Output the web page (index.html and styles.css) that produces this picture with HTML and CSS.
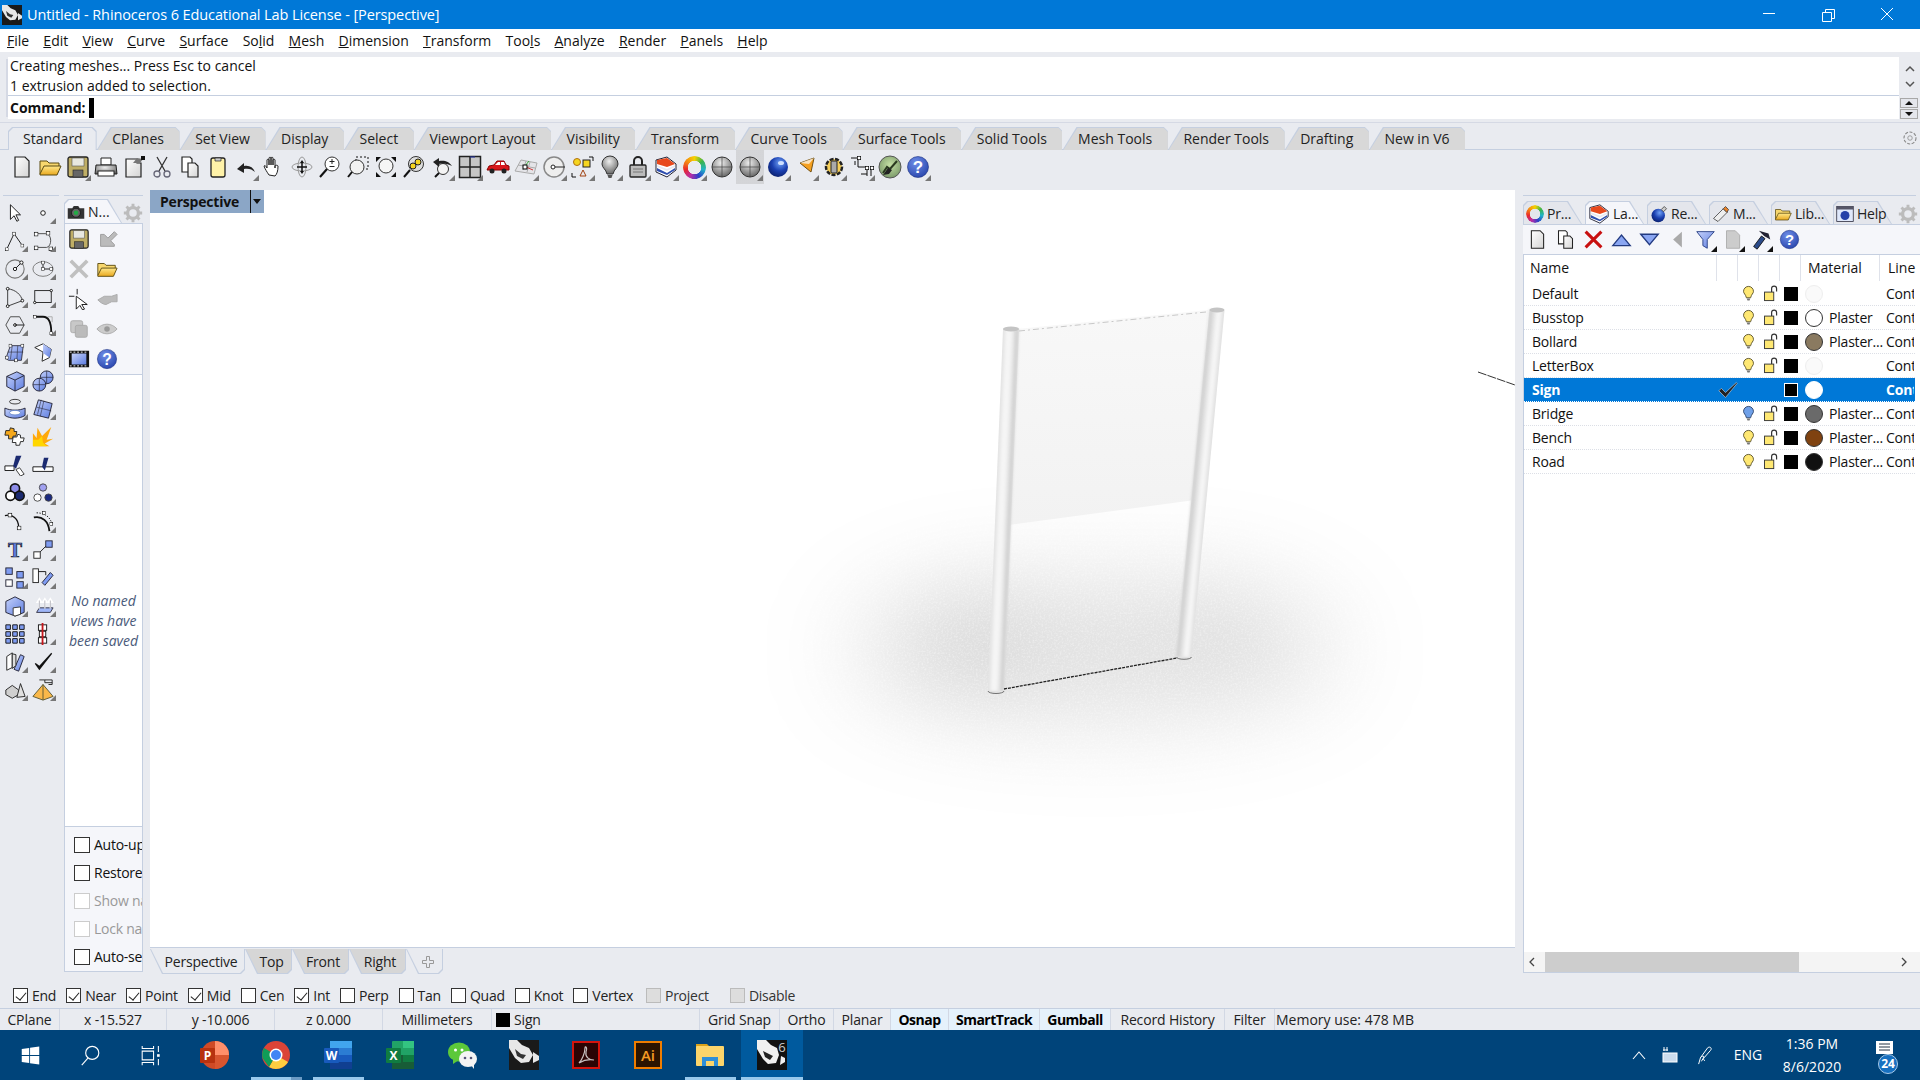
FILE: index.html
```html
<!DOCTYPE html>
<html lang="en">
<head>
<meta charset="utf-8">
<title>Untitled - Rhinoceros 6</title>
<link rel="stylesheet" href="styles.css">
</head>
<body>
<svg class="defs" aria-hidden="true">
  <defs>
    <linearGradient id="gw" x1="0" y1="0" x2="1" y2="1"><stop offset="0" stop-color="#fff"/><stop offset="1" stop-color="#d4d4d4"/></linearGradient>
    <linearGradient id="gf" x1="0" y1="0" x2="0" y2="1"><stop offset="0" stop-color="#ffe88a"/><stop offset="1" stop-color="#e9a81e"/></linearGradient>
    <linearGradient id="gb" x1="0" y1="0" x2="1" y2="1"><stop offset="0" stop-color="#c6d2fb"/><stop offset="1" stop-color="#5d7de0"/></linearGradient>
    <linearGradient id="gp" x1="0" y1="0" x2="0" y2="1"><stop offset="0" stop-color="#f8f8f8"/><stop offset="1" stop-color="#f2f2f2"/></linearGradient>
    <radialGradient id="gs" cx=".45" cy=".3" r=".8"><stop offset="0" stop-color="#eee"/><stop offset="1" stop-color="#555"/></radialGradient>
    <radialGradient id="gbl" cx=".6" cy=".3" r=".8"><stop offset="0" stop-color="#6fa0f5"/><stop offset=".5" stop-color="#1a3fb0"/><stop offset="1" stop-color="#071a60"/></radialGradient>
    <radialGradient id="gh" cx=".4" cy=".3" r=".8"><stop offset="0" stop-color="#6f8fe8"/><stop offset="1" stop-color="#2440a8"/></radialGradient>
    <radialGradient id="gg" cx=".5" cy=".4" r=".7"><stop offset="0" stop-color="#c5e0a5"/><stop offset="1" stop-color="#6f8f60"/></radialGradient>
    <filter id="soft" x="-30%" y="-10%" width="160%" height="120%"><feGaussianBlur stdDeviation="1.400"/></filter>
    <filter id="shadow" filterUnits="userSpaceOnUse" x="500" y="360" width="1200" height="640">
      <feGaussianBlur in="SourceGraphic" stdDeviation="50" result="b"/>
      <feTurbulence type="fractalNoise" baseFrequency=".55" numOctaves="2" seed="4" result="n"/>
      <feColorMatrix in="n" type="matrix" values="0 0 0 0 0 0 0 0 0 0 0 0 0 0 0 0 0 0 .9 .5" result="a"/>
      <feComposite in="b" in2="a" operator="in"/>
    </filter>
    <symbol id="doc" viewBox="0 0 24 24"><path d="M5 2h10l4 4v16H5z" fill="url(#gw)" stroke="#222" stroke-width="1.2"/></symbol>
    <symbol id="copy" viewBox="0 0 24 24"><path d="M4 2h8l2 2v13H4z" fill="#fff" stroke="#222" stroke-width="1.2"/><path d="M10 8h7l3 3v11H10z" fill="url(#gw)" stroke="#222" stroke-width="1.2"/></symbol>
    <symbol id="folder" viewBox="0 0 24 24"><path d="M2 19V6h7l2 2h10v4" fill="#f7d76e" stroke="#5a4a10"/><path d="M2 19l4-8h17l-4 9H2z" fill="url(#gf)" stroke="#5a4a10"/></symbol>
    <symbol id="save" viewBox="0 0 24 24"><rect x="2" y="2" width="20" height="20" rx="2" fill="#bfae66" stroke="#222" stroke-width="1.3"/><rect x="6" y="3" width="12" height="8" fill="#e8e8e0" stroke="#555" stroke-width=".6"/><rect x="7" y="15" width="10" height="7" fill="#666" stroke="#222" stroke-width=".6"/></symbol>
    <symbol id="help" viewBox="0 0 24 24"><circle cx="12" cy="12" r="10.5" fill="url(#gh)" stroke="#1b2f80" stroke-width=".6"/><text x="12" y="18" text-anchor="middle" font-family="Liberation Sans, sans-serif" font-weight="700" font-size="17" fill="#fff">?</text></symbol>
    <symbol id="bulb" viewBox="0 0 24 24"><path d="M12 2a7 7 0 0 0-7 7c0 3 3 4 4 9h6c1-5 4-6 4-9a7 7 0 0 0-7-7z" fill="#ffe873" stroke="#4d4420" stroke-width="1.2"/><path d="M9.500 19h5l-1 3h-3z" fill="#777"/></symbol>
    <symbol id="bulbb" viewBox="0 0 24 24"><path d="M12 2a7 7 0 0 0-7 7c0 3 3 4 4 9h6c1-5 4-6 4-9a7 7 0 0 0-7-7z" fill="#6fa0e8" stroke="#243a60" stroke-width="1.2"/><path d="M9.500 19h5l-1 3h-3z" fill="#777"/></symbol>
    <symbol id="lock" viewBox="-2 0 24 24"><rect x="3" y="10" width="13" height="12" fill="#ffe873" stroke="#333" stroke-width="1.300"/><path d="M13 10V5a3.500 3.500 0 0 1 7 0v4" fill="none" stroke="#333" stroke-width="1.700"/></symbol>
    <symbol id="node" viewBox="0 0 6 6"><rect x=".5" y=".5" width="5" height="5" fill="#fff" stroke="#000"/></symbol>
    <symbol id="gear" viewBox="0 0 24 24"><circle cx="12" cy="12" r="6.500" fill="none" stroke="#bcbcbc" stroke-width="4"/><path d="M12 1v5M12 18v5M1 12h5M18 12h5M4.200 4.200l3.500 3.500M16.300 16.300l3.500 3.500M4.200 19.800l3.500-3.500M16.300 7.700l3.500-3.500" stroke="#bcbcbc" stroke-width="3.500"/></symbol>
    <symbol id="rhino" viewBox="0 0 30 30"><rect width="30" height="30" fill="#1a1a1a"/><path d="M0 0h8l5 5 7 3 4 7-4 7-8 1-6-5-6-10zM24 12l6 4v4l-6 3z" fill="#e8e8e8"/><path d="M6 9l6 5 5 1-3 4-6-3z" fill="#333"/></symbol>
    <symbol id="shield" viewBox="0 0 24 24"><path d="M2 5l11-3 9 7v6l-9 7-11-5z" fill="#fff" stroke="#223" stroke-width="1"/><path d="M3 5l10-2 8 6-8 3-10-3z" fill="#e8481c"/><path d="M3 10l10 4 8-4v2l-8 4-10-4z" fill="#e8e8f0"/><path d="M3 13l10 5 8-5v2l-8 5-10-4z" fill="#3050b0"/></symbol>
  </defs>
</svg>

<header class="titlebar">
  <svg class="app-icon"><use href="#rhino"/></svg>
  <span class="title-text">Untitled - Rhinoceros 6 Educational Lab License - [Perspective]</span>
  <div class="winbtns">
    <svg viewBox="0 0 60 29"><path d="M24 13.500h12" stroke="#fff"/></svg>
    <svg viewBox="0 0 60 29"><path d="M24.500 12.500h9v9h-9zM27.500 12.500v-3h9v9h-3" fill="none" stroke="#fff"/></svg>
    <svg viewBox="0 0 60 29"><path d="M24 8l12 12M36 8L24 20" stroke="#fff"/></svg>
  </div>
</header>

<nav class="menubar">
  <span><u>F</u>ile</span><span><u>E</u>dit</span><span><u>V</u>iew</span><span><u>C</u>urve</span><span><u>S</u>urface</span><span>So<u>l</u>id</span><span><u>M</u>esh</span><span><u>D</u>imension</span><span><u>T</u>ransform</span><span>Too<u>l</u>s</span><span><u>A</u>nalyze</span><span><u>R</u>ender</span><span><u>P</u>anels</span><span><u>H</u>elp</span>
</nav>

<section class="cmd">
  <div class="cmd-main">
    <div class="history"><div>Creating meshes... Press Esc to cancel</div><div>1 extrusion added to selection.</div></div>
    <div class="prompt"><b>Command:</b><i class="caret"></i></div>
  </div>
  <div class="cmd-side">
    <div class="cmd-scroll">
      <svg viewBox="0 0 12 8"><path d="M2 6l4-4 4 4" fill="none" stroke="#555" stroke-width="1.500"/></svg>
      <svg viewBox="0 0 12 8"><path d="M2 2l4 4 4-4" fill="none" stroke="#555" stroke-width="1.500"/></svg>
    </div>
    <div class="spin"><span class="up"></span><span class="down"></span></div>
  </div>
</section>

<div class="ribbon">
  <span class="rtab current">Standard</span><span class="rtab">CPlanes</span><span class="rtab">Set View</span><span class="rtab">Display</span><span class="rtab">Select</span><span class="rtab">Viewport Layout</span><span class="rtab">Visibility</span><span class="rtab">Transform</span><span class="rtab">Curve Tools</span><span class="rtab">Surface Tools</span><span class="rtab">Solid Tools</span><span class="rtab">Mesh Tools</span><span class="rtab">Render Tools</span><span class="rtab">Drafting</span><span class="rtab">New in V6</span>
  <svg class="ribbon-gear" viewBox="0 0 24 24"><circle cx="12" cy="12" r="8" fill="none" stroke="#888" stroke-width="1.500" stroke-dasharray="4 2"/><circle cx="12" cy="12" r="3" fill="none" stroke="#888"/></svg>
</div>

<div class="toolbar">
  <span class="t"><svg><use href="#doc"/></svg></span>
  <span class="t"><svg><use href="#folder"/></svg></span>
  <span class="t m"><svg><use href="#save"/></svg></span>
  <span class="t"><svg viewBox="0 0 24 24"><path d="M7 3h10v7H7z" fill="#fff" stroke="#222"/><path d="M2 10h20l1 9H1z" fill="url(#gs)" stroke="#222"/><rect x="4" y="16" width="16" height="5" fill="#fff" stroke="#222"/></svg></span>
  <span class="t"><svg viewBox="0 0 24 24"><path d="M4 4h11v4h4v14H4z" fill="url(#gw)" stroke="#222" stroke-width="1.200"/><path d="M11 8l4-5 6 1-3 4z" fill="#777"/><rect x="19" y="1" width="4" height="4" fill="#111"/></svg></span>
  <span class="t"><svg viewBox="0 0 24 24"><path d="M7 2l8 14M17 2L9 16" stroke="#333" stroke-width="1.300"/><circle cx="7" cy="19" r="3" fill="none" stroke="#667" stroke-width="1.300"/><circle cx="17" cy="19" r="3" fill="none" stroke="#667" stroke-width="1.300"/></svg></span>
  <span class="t"><svg><use href="#copy"/></svg></span>
  <span class="t"><svg viewBox="0 0 24 24"><rect x="5" y="3" width="14" height="19" rx="2" fill="#fff2a8" stroke="#222" stroke-width="1.300"/><path d="M9 3h6v3H9z" fill="#ccc" stroke="#222" stroke-width=".7"/></svg></span>
  <span class="t m"><svg viewBox="0 0 24 24"><path d="M3 14l7-6v3c5-1 9 1 11 6-3-3-7-4-11-3v4z" fill="#222"/></svg></span>
  <span class="t"><svg viewBox="0 0 24 24"><path d="M7 20c-2-3-4-6-5-9 1-1 2 0 3 2V5c0-1 2-1 2 0v5-7c0-1 2-1 2 0v7-7c0-1 2-1 2 0v7-5c0-1 2-1 2 0v8-2c0-1 3-1 3 0 0 5-1 8-3 10z" fill="#fff" stroke="#222" stroke-linejoin="round"/></svg></span>
  <span class="t"><svg viewBox="0 0 24 24"><ellipse cx="12" cy="12" rx="10" ry="4" fill="none" stroke="#9a9a9a"/><ellipse cx="12" cy="12" rx="4" ry="10" fill="none" stroke="#9a9a9a"/><path d="M12 7v10M7 12h10" stroke="#111" stroke-width="1.500"/><path d="M12 5l-2 3h4zM12 19l-2-3h4z" fill="#111"/></svg></span>
  <span class="t"><svg viewBox="0 0 24 24"><circle cx="14" cy="9" r="7" fill="#fff" stroke="#333"/><path d="M9 14l-7 8" stroke="#111" stroke-width="2"/><path d="M14 4v5M11.500 6.500h5M11.500 11.500h5" stroke="#222"/></svg></span>
  <span class="t"><svg viewBox="0 0 24 24"><rect x="10" y="2" width="12" height="12" fill="none" stroke="#111" stroke-dasharray="2 2"/><circle cx="11" cy="12" r="7" fill="#f2f2f2" stroke="#333"/><path d="M6 17l-4 5" stroke="#111" stroke-width="2"/></svg></span>
  <span class="t"><svg viewBox="0 0 24 24"><circle cx="12" cy="11" r="7" fill="#f6f6f6" stroke="#333"/><path d="M2 2h5L2 7zM22 2v5l-5-5zM2 22v-5l5 5zM22 22h-5l5-5z" fill="#111"/></svg></span>
  <span class="t"><svg viewBox="0 0 24 24"><circle cx="14" cy="9" r="7.500" fill="#ddd" stroke="#333"/><circle cx="11" cy="11" r="3" fill="#f5d520" stroke="#222"/><circle cx="16" cy="7" r="3" fill="#f5d520" stroke="#222"/><path d="M8 15l-6 7" stroke="#111" stroke-width="2"/></svg></span>
  <span class="t m"><svg viewBox="0 0 24 24"><circle cx="13" cy="14" r="5.500" fill="#f4f4f4" stroke="#333"/><path d="M9 18l-4 4" stroke="#111" stroke-width="2"/><path d="M3 7l6-4v3c5-1 10 0 13 5-4-2-8-3-13-2v3z" fill="#222"/></svg></span>
  <span class="t m"><svg viewBox="0 0 24 24"><rect x="1.500" y="1.500" width="21" height="21" fill="#c6c6c6" stroke="#222" stroke-width="1.500"/><path d="M12 2v20M2 12h20" stroke="#222" stroke-width="1.500"/><path d="M12 2h5" stroke="#2233aa"/></svg></span>
  <span class="t m"><svg viewBox="0 0 24 24"><path d="M1 15l2-4 5-1 3-4h7l2 4 3 1v4z" fill="#d8171b" stroke="#800"/><path d="M9 10l3-3h2v3zM15 7h3l1 3h-4z" fill="#fff"/><circle cx="6" cy="16" r="2.500" fill="#222"/><circle cx="18" cy="16" r="2.500" fill="#222"/></svg></span>
  <span class="t m"><svg viewBox="0 0 24 24"><path d="M7 5l16 3-3 11L1 16z" fill="#e4e4e8" stroke="#aaa"/><path d="M12 6l-3 9M4 10l17 3M16 7l-3 10" stroke="#aaa"/><path d="M11 11l4-5" stroke="#3a3"/><path d="M12 12l7 3" stroke="#c33"/><rect x="9" y="10" width="4" height="4" fill="#fff" stroke="#000"/></svg></span>
  <span class="t m"><svg viewBox="0 0 24 24"><circle cx="12" cy="12" r="10" fill="#eee" stroke="#888" stroke-width="1.500"/><circle cx="11" cy="12" r="2" fill="#fff" stroke="#222"/><path d="M13 12h10" stroke="#222"/></svg></span>
  <span class="t m"><svg viewBox="0 0 24 24"><circle cx="7" cy="7" r="3.500" fill="#f5d520" stroke="#b07010"/><rect x="13" y="5" width="7" height="7" fill="#f5d520" stroke="#222"/><path d="M10 21l3-6 3 6z" fill="none" stroke="#a04010"/><path d="M2 18v4h4M19 2h4v4" fill="none" stroke="#111"/></svg></span>
  <span class="t m"><svg viewBox="0 0 24 24"><path d="M12 1a8 8 0 0 0-8 8c0 4 4 5 5 10h6c1-5 5-6 5-10a8 8 0 0 0-8-8z" fill="url(#gs)" stroke="#333"/><path d="M9.500 20h5l-1 3h-3z" fill="#555"/></svg></span>
  <span class="t m"><svg viewBox="0 0 24 24"><rect x="4" y="10" width="16" height="12" rx="1" fill="#bbb" stroke="#222" stroke-width="1.300"/><path d="M8 10V6a4 4 0 0 1 8 0v4" fill="none" stroke="#222" stroke-width="2"/><path d="M7 14h10M7 17h10" stroke="#777"/></svg></span>
  <span class="t m"><svg><use href="#shield"/></svg></span>
  <span class="t m"><i class="wheel"></i></span>
  <span class="t"><svg viewBox="0 0 24 24"><circle cx="12" cy="12" r="10" fill="url(#gs)" stroke="#333"/><path d="M2 12h20M12 2v20" stroke="#444" stroke-width=".7"/></svg></span>
  <span class="t m dots"><svg viewBox="0 0 24 24"><circle cx="12" cy="12" r="10" fill="url(#gs)" stroke="#333"/><path d="M2 12h20M12 2v20" stroke="#444" stroke-width=".7"/></svg></span>
  <span class="t m"><svg viewBox="0 0 24 24"><circle cx="12" cy="12" r="10" fill="url(#gbl)"/><ellipse cx="15" cy="8" rx="3" ry="2" fill="#cfe0ff"/></svg></span>
  <span class="t m"><svg viewBox="0 0 24 24"><path d="M6 8l14-5-3 14z" fill="#f5a020" stroke="#735010"/><path d="M6 8l9 1 5-6z" fill="#fff" opacity=".7"/></svg></span>
  <span class="t m"><svg viewBox="0 0 24 24"><circle cx="12" cy="12" r="8" fill="#f5cf5a" stroke="#222" stroke-dasharray="4 1.500" stroke-width="2.500"/><rect x="9" y="6" width="6" height="12" rx="1" fill="#aaa" stroke="#222"/></svg></span>
  <span class="t m"><svg viewBox="0 0 24 24"><path d="M1 3h7v9h9v9M21 13v8M5 6v4M11 19h6" fill="none" stroke="#111"/><use href="#node" x="7" y="1" width="4" height="4"/><use href="#node" x="15" y="11" width="4" height="4"/><use href="#node" x="20" y="11" width="4" height="4"/></svg></span>
  <span class="t"><svg viewBox="0 0 24 24"><circle cx="12" cy="12" r="11" fill="url(#gg)" stroke="#555"/><path d="M5 18l4-6 3 2 7-8" fill="none" stroke="#2a3a20" stroke-width="2"/><path d="M5 20l5-7 4 2-3 4z" fill="#222"/></svg></span>
  <span class="t m"><svg><use href="#help"/></svg></span>
</div>

<main class="work">
  <aside class="leftbar">
    <i class="grip"></i>
    <div class="ltools">
      <span class="l"><svg viewBox="0 0 24 24"><path d="M7 3v16l4-4 3 6 2-1-3-6h5z" fill="#fff" stroke="#111"/></svg></span>
      <span class="l m"><svg viewBox="0 0 24 24"><circle cx="12" cy="12" r="2.500" fill="#fff" stroke="#111"/></svg></span>
      <span class="l m"><svg viewBox="0 0 24 24"><path d="M3 21L11 4l9 13" fill="none" stroke="#111"/><use href="#node" x="1" y="19" width="4" height="4"/><use href="#node" x="9" y="2" width="4" height="4"/><use href="#node" x="18" y="15" width="4" height="4"/></svg></span>
      <span class="l m"><svg viewBox="0 0 24 24"><path d="M4 4h11c7 0 7 14 1 15H4" fill="none" stroke="#444"/><use href="#node" x="2" y="17" width="5" height="5"/><use href="#node" x="2" y="2" width="5" height="5"/><use href="#node" x="15" y="1" width="5" height="5"/><use href="#node" x="18" y="18" width="5" height="5"/></svg></span>
      <span class="l m"><svg viewBox="0 0 24 24"><circle cx="12" cy="12" r="10" fill="none" stroke="#777" stroke-width="1.200"/><path d="M12 12l7-7" stroke="#111"/><circle cx="12" cy="12" r="1.800" fill="#fff" stroke="#111"/><circle cx="19" cy="5" r="1.800" fill="#fff" stroke="#111"/></svg></span>
      <span class="l m"><svg viewBox="0 0 24 24"><ellipse cx="12" cy="12" rx="11" ry="8" fill="none" stroke="#777"/><path d="M12 12V5M12 12h9" stroke="#111"/><use href="#node" x="10" y="3" width="4" height="4"/><use href="#node" x="10" y="10" width="4" height="4"/><use href="#node" x="19" y="10" width="4" height="4"/></svg></span>
      <span class="l m"><svg viewBox="0 0 24 24"><path d="M4 3c9 1 15 7 16 13L4 22z" fill="none" stroke="#333"/><circle cx="4" cy="3" r="1.500" fill="#fff" stroke="#111"/><circle cx="20" cy="16" r="1.500" fill="#fff" stroke="#111"/><circle cx="4" cy="22" r="1.500" fill="#fff" stroke="#111"/></svg></span>
      <span class="l m"><svg viewBox="0 0 24 24"><rect x="3" y="5" width="18" height="13" fill="none" stroke="#222"/><circle cx="3" cy="18" r="1.300" fill="#fff" stroke="#111"/><circle cx="21" cy="5" r="1.300" fill="#fff" stroke="#111"/></svg></span>
      <span class="l m"><svg viewBox="0 0 24 24"><path d="M7 3h10l5 9-5 9H7l-5-9z" fill="none" stroke="#444"/><circle cx="12" cy="12" r="1.500" fill="#fff" stroke="#111"/><path d="M12 12h10" stroke="#111"/></svg></span>
      <span class="l m"><svg viewBox="0 0 24 24"><path d="M2 3h10c6 0 9 5 9 17" fill="none" stroke="#111" stroke-width="2"/><path d="M17 3h5v6" fill="none" stroke="#aaa"/><use href="#node" x="1" y="1" width="4" height="4"/><use href="#node" x="19" y="19" width="4" height="4"/></svg></span>
      <span class="l m"><svg viewBox="0 0 24 24"><path d="M7 4h14l-2 16H5L2 18z" fill="url(#gb)" stroke="#334"/><path d="M9 4L7 19M15 4l-1 16M4 11h17" stroke="#334" stroke-width=".7"/><use href="#node" x="5" y="2" width="4" height="4"/><use href="#node" x="18" y="2" width="4" height="4"/><use href="#node" x="1" y="15" width="4" height="4"/><use href="#node" x="11" y="18" width="4" height="4"/></svg></span>
      <span class="l m"><svg viewBox="0 0 24 24"><path d="M3 6l9-4 9 6-2 9-8 4 1-10z" fill="#fff" stroke="#222"/><path d="M12 2l9 6-2 9-7-5z" fill="url(#gb)"/></svg></span>
      <span class="l m"><svg viewBox="0 0 24 24"><path d="M3 7l11-5 8 4v12l-10 5-9-5z" fill="url(#gb)" stroke="#223"/><path d="M3 7l9 4 10-5M12 11v12" stroke="#223" fill="none"/></svg></span>
      <span class="l m"><svg viewBox="0 0 24 24"><circle cx="16" cy="8" r="7" fill="url(#gb)" stroke="#223"/><circle cx="8" cy="16" r="7" fill="url(#gb)" stroke="#223"/><path d="M1 16h14M8 9v14M9 8h14M16 1v14" stroke="#223" stroke-width=".7"/></svg></span>
      <span class="l m"><svg viewBox="0 0 24 24"><ellipse cx="12" cy="4" rx="6" ry="2.500" fill="none" stroke="#333"/><path d="M1 11c6 3 16 3 22 0v8c-6 4-16 4-22 0z" fill="url(#gb)" stroke="#223"/><ellipse cx="12" cy="16" rx="6" ry="2.500" fill="#fff" stroke="#68c"/></svg></span>
      <span class="l m"><svg viewBox="0 0 24 24"><path d="M7 2l15 4-4 16L2 18z" fill="url(#gb)" stroke="#223"/><path d="M13 3l-4 17M5 10l16 4M10 2l-4 16" stroke="#223" stroke-width=".6"/></svg></span>
      <span class="l"><svg viewBox="0 0 24 24"><path d="M2 5h4l1-3 4 1v3h3l-1 5h-3l-1 3H5V10H1z" fill="#f5a81c" stroke="#222"/><path d="M10 12h4l1-3 3 1v3h4l-1 4h-3l-1 4h-4v-3H9z" fill="#fff" stroke="#222"/></svg></span>
      <span class="l"><svg viewBox="0 0 24 24"><path d="M1 22V8l4 5 1-11 5 9 10-10-5 14 7-1-9 5 5 3z" fill="#ffa90a"/><path d="M1 22V15l6 0 4-4 1 7 4 4z" fill="#ffd700"/></svg></span>
      <span class="l"><svg viewBox="0 0 24 24"><path d="M1 13h10v5H1z" fill="#fff" stroke="#111"/><path d="M10 13l3-11h6l-6 14z" fill="#1b2a70"/><path d="M13 17l4-2 5 7-4 2z" fill="#fff" stroke="#333"/></svg></span>
      <span class="l"><svg viewBox="0 0 24 24"><path d="M1 14h22v5H1z" fill="#fff" stroke="#111"/><path d="M11 14l2-10h5l-4 14z" fill="#1b2a70"/></svg></span>
      <span class="l m"><svg viewBox="0 0 24 24"><circle cx="12" cy="7" r="5" fill="#8c8ce8" stroke="#111" stroke-width="1.800"/><circle cx="7" cy="15" r="5" fill="#fff" stroke="#111" stroke-width="1.800"/><circle cx="17" cy="15" r="5" fill="#1b2a70" stroke="#111" stroke-width="1.800"/></svg></span>
      <span class="l m"><svg viewBox="0 0 24 24"><circle cx="12" cy="6" r="4" fill="#a0a0f0" stroke="#444"/><circle cx="6" cy="17" r="4" fill="#fff" stroke="#444"/><circle cx="18" cy="17" r="4" fill="#1b2a80" stroke="#444"/></svg></span>
      <span class="l"><svg viewBox="0 0 24 24"><path d="M1 5c8-2 15 3 15 13" fill="none" stroke="#111" stroke-width="1.500"/><use href="#node" x="4" y="2" width="5" height="5"/><use href="#node" x="14" y="16" width="5" height="5"/></svg></span>
      <span class="l m"><svg viewBox="0 0 24 24"><path d="M2 7c9-2 16 4 17 15" fill="none" stroke="#111" stroke-width="2"/><path d="M5 2c9 0 16 5 17 14" fill="none" stroke="#111" stroke-dasharray="1.500 1.500"/><use href="#node" x="11" y="0" width="4" height="4"/><use href="#node" x="19" y="12" width="4" height="4"/></svg></span>
      <span class="l m"><svg viewBox="0 0 24 24"><text x="12" y="20" text-anchor="middle" font-family="Liberation Serif, serif" font-size="23" font-weight="700" fill="#5d7de0" stroke="#111" stroke-width=".7">T</text></svg></span>
      <span class="l m"><svg viewBox="0 0 24 24"><rect x="2" y="14" width="7" height="7" fill="#fff" stroke="#222"/><rect x="15" y="2" width="7" height="7" fill="#7f9cf2" stroke="#223"/><path d="M9 14l6-6" stroke="#111"/></svg></span>
      <span class="l m"><svg viewBox="0 0 24 24"><rect x="2" y="1" width="7" height="7" fill="#7f9cf2" stroke="#223"/><rect x="14" y="5" width="7" height="7" fill="#7f9cf2" stroke="#223"/><rect x="2" y="14" width="7" height="7" fill="#fff" stroke="#223"/><rect x="14" y="16" width="7" height="7" fill="#7f9cf2" stroke="#223"/></svg></span>
      <span class="l m"><svg viewBox="0 0 24 24"><rect x="1" y="2" width="6" height="15" fill="#fff" stroke="#222"/><path d="M14 20l9-11 -3-3-9 11z" fill="#7f9cf2" stroke="#223"/><path d="M7 5h8v4" fill="none" stroke="#111"/></svg></span>
      <span class="l m"><svg viewBox="0 0 24 24"><path d="M2 7l10-5 10 5v12l-10 4-10-4z" fill="url(#gb)" stroke="#223"/><path d="M10 14l8-1v8l-6 2-2-1z" fill="#fff" stroke="#333"/></svg></span>
      <span class="l m"><svg viewBox="0 0 24 24"><path d="M5 19l3-5h15l-3 5z" fill="#9fb6f8" stroke="#334"/><path d="M8 15V5M14 15V5M20 15V5M5.500 8L8 4l2.500 4zM11.500 8L14 4l2.500 4zM17.500 8L20 4l2.500 4z" fill="#fff" stroke="#fff" stroke-width="1.500"/><path d="M8 15V6M14 15V6M20 15V6" stroke="#667" stroke-width=".5"/></svg></span>
      <span class="l"><svg viewBox="0 0 24 24"><path d="M2 2h5v5H2zM9.500 2h5v5h-5zM17 2h5v5h-5zM2 9.500h5v5H2zM9.500 9.500h5v5h-5zM17 9.500h5v5h-5zM2 17h5v5H2zM9.500 17h5v5h-5zM17 17h5v5h-5z" fill="#7f9cf2" stroke="#111"/></svg></span>
      <span class="l m"><svg viewBox="0 0 24 24"><rect x="7" y="2" width="9" height="6" fill="#fff" stroke="#111"/><rect x="8" y="9" width="7" height="6" fill="#fff" stroke="#111"/><rect x="7" y="16" width="9" height="6" fill="#fff" stroke="#111"/><path d="M11.500 0v24" stroke="#c4161c" stroke-width="2"/></svg></span>
      <span class="l m"><svg viewBox="0 0 24 24"><path d="M3 6l6-4v16l-6 3z" fill="#fff" stroke="#222"/><path d="M11 20L18 4l4 2-6 16z" fill="url(#gb)" stroke="#223"/><path d="M9 3l4 1v12l-4 3z" fill="#ddd" stroke="#222"/></svg></span>
      <span class="l m"><svg viewBox="0 0 24 24"><path d="M3 14l5 7L22 3l-1-1L8 16l-4-3z" fill="#111"/></svg></span>
      <span class="l m"><svg viewBox="0 0 24 24"><path d="M2 12l7-5 7 5v5l-7 4-7-4z" fill="#cfcfcf" stroke="#222"/><path d="M14 20l4-15 5 14z" fill="#e0e0e0" stroke="#222"/></svg></span>
      <span class="l m"><svg viewBox="0 0 24 24"><path d="M1 19l11-13 11 13-11 4z" fill="#f9b84a" stroke="#553"/><path d="M12 6v17" stroke="#553"/><path d="M8 1l6 0 0 3h8M14 1h8v5h-4" fill="none" stroke="#222"/></svg></span>
    </div>
  </aside>

  <aside class="named">
    <i class="grip"></i>
    <div class="ntabs">
      <span class="stab current nt"><svg class="s16" viewBox="0 0 24 24"><path d="M1 7h6l2-3h6l2 3h6v14H1z" fill="#333"/><circle cx="12" cy="13" r="6" fill="#666" stroke="#111"/><circle cx="12" cy="13" r="3" fill="#2a4"/></svg>N...</span>
      <svg class="panel-gear"><use href="#gear"/></svg>
    </div>
    <div class="ntools">
      <span class="n"><svg><use href="#save"/></svg></span>
      <span class="n"><svg viewBox="0 0 24 24"><path d="M5 20V7h4l4 4 7-7 3 3-7 7 4 4v2z" fill="#bbb" stroke="#999"/></svg></span>
      <span class="n"><svg viewBox="0 0 24 24"><path d="M3 3l18 18M21 3L3 21" stroke="#c0c0c0" stroke-width="4"/></svg></span>
      <span class="n"><svg><use href="#folder"/></svg></span>
      <span class="n"><svg viewBox="0 0 24 24"><path d="M1 9h6M10 1v6M9 9v14l4-4 3 5 2-1-3-5h6z" fill="#fff" stroke="#111"/></svg></span>
      <span class="n"><svg viewBox="0 0 24 24"><path d="M2 13l7-4h8l6-2v8h-6l-6 3c-3 0-6-2-9-5z" fill="#bbb" stroke="#aaa"/></svg></span>
      <span class="n"><svg viewBox="0 0 24 24"><rect x="3" y="3" width="13" height="13" rx="2" fill="#c8c8c8" stroke="#aaa"/><rect x="8" y="8" width="13" height="13" rx="2" fill="#bbb" stroke="#aaa"/></svg></span>
      <span class="n"><svg viewBox="0 0 24 24"><path d="M1 12c6-7 16-7 22 0-6 7-16 7-22 0z" fill="#ccc" stroke="#aaa"/><circle cx="12" cy="12" r="3" fill="#999"/></svg></span>
      <span class="n"><svg viewBox="0 0 24 24"><rect x="1" y="3" width="22" height="18" fill="#111"/><rect x="4" y="6" width="16" height="12" fill="url(#gb)"/><path d="M2 4.500h20M2 19.500h20" stroke="#fff" stroke-dasharray="2 2"/></svg></span>
      <span class="n"><svg><use href="#help"/></svg></span>
    </div>
    <div class="nempty">No named views have been saved</div>
    <div class="nopts">
      <label class="opt"><i class="cb"></i>Auto-update</label>
      <label class="opt"><i class="cb"></i>Restore</label>
      <label class="opt off"><i class="cb"></i>Show named</label>
      <label class="opt off"><i class="cb"></i>Lock named</label>
      <label class="opt"><i class="cb"></i>Auto-select</label>
    </div>
  </aside>

  <section class="viewcol">
    <div class="viewport">
      <svg class="scene" viewBox="150 190 1365 756" preserveAspectRatio="none">
        <rect x="150" y="190" width="1365" height="756" fill="#fff"/>
        <g filter="url(#shadow)">
          <ellipse cx="1095" cy="650" rx="250" ry="70" fill="#000" opacity=".12"/>
          <ellipse cx="970" cy="640" rx="55" ry="42" fill="#000" opacity=".09"/>
          <ellipse cx="1225" cy="620" rx="55" ry="36" fill="#000" opacity=".05"/>
        </g>
        <path d="M1009 525L1017 329 1208 310 1195 500z" fill="url(#gp)"/>
        <path d="M1019 331L1206 312" stroke="#bbb" stroke-dasharray="6 3 2 3" stroke-width=".8"/>
        <path d="M1011 329L996 691" stroke="#e4e4e4" stroke-width="16"/>
        <path d="M1017 329L1002 691" stroke="#cfcfcf" stroke-width="3" filter="url(#soft)"/>
        <path d="M1009 329L994 691" stroke="#f5f5f5" stroke-width="7" filter="url(#soft)"/>
        <path d="M1217 310L1184 657" stroke="#e2e2e2" stroke-width="15"/>
        <path d="M1211 310L1178 657" stroke="#cfcfcf" stroke-width="3" filter="url(#soft)"/>
        <path d="M1219 310L1186 657" stroke="#f5f5f5" stroke-width="6" filter="url(#soft)"/>
        <ellipse cx="1011" cy="329" rx="8" ry="2.500" fill="#c4c4c4"/>
        <ellipse cx="1217" cy="310" rx="7.500" ry="2.500" fill="#c4c4c4"/>
        <path d="M988 691a8 2.500 0 0 0 16 0" fill="#e4e4e4" stroke="#555" stroke-width=".8"/>
        <path d="M1176.500 657a7.500 2.300 0 0 0 15 0" fill="#e2e2e2" stroke="#555" stroke-width=".8"/>
        <path d="M1004 689L1177 658" stroke="#222" stroke-width="1.300" stroke-dasharray="3 1"/>
        <path d="M1478 372L1515 385" stroke="#333" stroke-width="1" stroke-dasharray="9 1"/>
      </svg>
      <div class="vp-label"><b>Perspective</b><span class="vp-drop"></span></div>
    </div>
    <div class="vtabs">
      <span class="vtab current">Perspective</span><span class="vtab">Top</span><span class="vtab">Front</span><span class="vtab">Right</span><span class="vtab add"><svg viewBox="0 0 14 14"><path d="M5.500 1.500h3v4h4v3h-4v4h-3v-4h-4v-3h4z" fill="none" stroke="#999"/></svg></span>
    </div>
  </section>

  <aside class="layers">
    <i class="grip"></i>
    <div class="ltabs">
      <span class="stab"><i class="wheel sm"></i>Pr...</span>
      <span class="stab current"><svg class="s22"><use href="#shield"/></svg>La...</span>
      <span class="stab"><svg class="s16" viewBox="0 0 24 24"><circle cx="11" cy="14" r="9" fill="url(#gbl)"/><path d="M15 6l4-4 3 3-4 4z" fill="#ccc" stroke="#333"/></svg>Re...</span>
      <span class="stab"><svg class="s16" viewBox="0 0 24 24"><path d="M2 18L15 5l5 5L8 22z" fill="#eee" stroke="#333"/><path d="M15 5l3-3 4 4-2 4z" fill="#e9832b" stroke="#333"/></svg>M...</span>
      <span class="stab"><svg class="s16"><use href="#folder"/></svg>Lib...</span>
      <span class="stab"><svg class="s16" viewBox="0 0 24 24"><rect x="1" y="2" width="22" height="20" fill="#dfe8fb" stroke="#223"/><rect x="1" y="2" width="22" height="4" fill="#556"/><circle cx="12" cy="14" r="6" fill="#2440a8"/></svg>Help</span>
      <svg class="panel-gear"><use href="#gear"/></svg>
    </div>
    <div class="lpanel">
      <div class="ltoolbar">
        <span class="p"><svg><use href="#doc"/></svg></span>
        <span class="p"><svg><use href="#copy"/></svg></span>
        <span class="p"><svg viewBox="0 0 24 24"><path d="M3 3l18 18M21 3L3 21" stroke="#c81010" stroke-width="3.500"/></svg></span>
        <span class="p"><svg viewBox="0 0 24 24"><path d="M2 19L12 7l10 12z" fill="#8aa6f2" stroke="#223a80" stroke-width="1.500"/></svg></span>
        <span class="p"><svg viewBox="0 0 24 24"><path d="M2 6l10 12L22 6z" fill="#8aa6f2" stroke="#223a80" stroke-width="1.500"/></svg></span>
        <span class="p"><svg viewBox="0 0 24 24"><path d="M17 3v18L7 12z" fill="#aaa"/></svg></span>
        <span class="p m"><svg viewBox="0 0 24 24"><path d="M2 3h20l-8 9v10l-5-3v-7z" fill="url(#gb)" stroke="#223a80"/></svg></span>
        <span class="p m"><svg viewBox="0 0 24 24"><path d="M4 2h10l5 5v15H4z" fill="#ccc" stroke="#aaa"/></svg></span>
        <span class="p m"><svg viewBox="0 0 24 24"><path d="M9 2l11 3 2 7-7-4z" fill="#223"/><path d="M3 20L12 8l4 3-9 12z" fill="#2a4a8a" stroke="#111"/></svg></span>
        <span class="p"><svg><use href="#help"/></svg></span>
      </div>
      <div class="lhead lgrid"><span class="c-name">Name</span><span></span><span></span><span></span><span></span><span class="c-mat">Material</span><span class="c-line">Line</span></div>
      <div class="lrows">
        <div class="lrow lgrid"><span class="c-name">Default</span><span></span><span class="ic"><svg><use href="#bulb"/></svg></span><span class="ic"><svg><use href="#lock"/></svg></span><span class="ic"><i class="sq"></i></span><span class="c-mat"><i class="dot faint"></i></span><span class="c-line">Continuous</span></div>
        <div class="lrow lgrid"><span class="c-name">Busstop</span><span></span><span class="ic"><svg><use href="#bulb"/></svg></span><span class="ic"><svg><use href="#lock"/></svg></span><span class="ic"><i class="sq"></i></span><span class="c-mat"><i class="dot c-white"></i>Plaster</span><span class="c-line">Continuous</span></div>
        <div class="lrow lgrid"><span class="c-name">Bollard</span><span></span><span class="ic"><svg><use href="#bulb"/></svg></span><span class="ic"><svg><use href="#lock"/></svg></span><span class="ic"><i class="sq"></i></span><span class="c-mat"><i class="dot c-brown"></i>Plaster...</span><span class="c-line">Continuous</span></div>
        <div class="lrow lgrid"><span class="c-name">LetterBox</span><span></span><span class="ic"><svg><use href="#bulb"/></svg></span><span class="ic"><svg><use href="#lock"/></svg></span><span class="ic"><i class="sq"></i></span><span class="c-mat"><i class="dot faint"></i></span><span class="c-line">Continuous</span></div>
        <div class="lrow lgrid sel"><span class="c-name">Sign</span><span class="ic"><svg class="chk" viewBox="0 0 24 24"><path d="M1 13l3-3 5 5L22 3l1 1L9 21z" fill="#222" stroke="#cfd8e4" stroke-width=".7"/></svg></span><span class="ic"></span><span class="ic"></span><span class="ic"><i class="sq"></i></span><span class="c-mat"><i class="dot c-sel"></i></span><span class="c-line">Continuous</span></div>
        <div class="lrow lgrid"><span class="c-name">Bridge</span><span></span><span class="ic"><svg><use href="#bulbb"/></svg></span><span class="ic"><svg><use href="#lock"/></svg></span><span class="ic"><i class="sq"></i></span><span class="c-mat"><i class="dot c-gray"></i>Plaster...</span><span class="c-line">Continuous</span></div>
        <div class="lrow lgrid"><span class="c-name">Bench</span><span></span><span class="ic"><svg><use href="#bulb"/></svg></span><span class="ic"><svg><use href="#lock"/></svg></span><span class="ic"><i class="sq"></i></span><span class="c-mat"><i class="dot c-rust"></i>Plaster...</span><span class="c-line">Continuous</span></div>
        <div class="lrow lgrid"><span class="c-name">Road</span><span></span><span class="ic"><svg><use href="#bulb"/></svg></span><span class="ic"><svg><use href="#lock"/></svg></span><span class="ic"><i class="sq"></i></span><span class="c-mat"><i class="dot c-black"></i>Plaster...</span><span class="c-line">Continuous</span></div>
      </div>
      <div class="hscroll">
        <svg viewBox="0 0 8 12"><path d="M6 2L2 6l4 4" fill="none" stroke="#444" stroke-width="1.300"/></svg>
        <div class="track"><div class="thumb"></div></div>
        <svg class="sc-end" viewBox="0 0 8 12"><path d="M2 2l4 4-4 4" fill="none" stroke="#444" stroke-width="1.300"/></svg>
      </div>
    </div>
  </aside>
</main>

<div class="osnap">
  <label class="sn"><i class="cb on"></i>End</label>
  <label class="sn"><i class="cb on"></i>Near</label>
  <label class="sn"><i class="cb on"></i>Point</label>
  <label class="sn"><i class="cb on"></i>Mid</label>
  <label class="sn"><i class="cb"></i>Cen</label>
  <label class="sn"><i class="cb on"></i>Int</label>
  <label class="sn"><i class="cb"></i>Perp</label>
  <label class="sn"><i class="cb"></i>Tan</label>
  <label class="sn"><i class="cb"></i>Quad</label>
  <label class="sn"><i class="cb"></i>Knot</label>
  <label class="sn"><i class="cb"></i>Vertex</label>
  <label class="sn dis"><i class="cb"></i>Project</label>
  <label class="sn dis"><i class="cb"></i>Disable</label>
</div>

<footer class="status">
  <span class="st w60">CPlane</span><span class="st w107">x -15.527</span><span class="st w108">y -10.006</span><span class="st w108">z 0.000</span><span class="st w109">Millimeters</span><span class="st w208 layer"><i class="sq"></i>Sign</span><span class="st w80">Grid Snap</span><span class="st w54">Ortho</span><span class="st w57">Planar</span><span class="st w58 on">Osnap</span><span class="st w91 on">SmartTrack</span><span class="st w71 on">Gumball</span><span class="st w114">Record History</span><span class="st w50">Filter</span><span class="mem">Memory use: 478 MB</span>
</footer>

<div class="taskbar">
  <span class="tk"><svg viewBox="0 0 24 24"><path d="M2 4.500l8.500-1.200v8H2zM11.500 3.200L22 1.700v9.600H11.500zM2 12.500h8.500v8.200L2 19.500zM11.500 12.500H22v9.800l-10.500-1.500z" fill="#fff"/></svg></span>
  <span class="tk"><svg viewBox="0 0 24 24"><circle cx="14" cy="9" r="7.500" fill="none" stroke="#fff" stroke-width="1.300"/><path d="M9 15l-7 8" stroke="#fff" stroke-width="1.300"/></svg></span>
  <span class="tk"><svg viewBox="0 0 24 24"><path d="M2.500 1v3h13V1M2.500 23v-3h13v3M2.500 7h13v10h-13zM21 1v7M21 16v7" fill="none" stroke="#fff" stroke-width="1.200"/><rect x="19.500" y="10.500" width="3" height="3" fill="#fff"/></svg></span>
  <span class="tk app first"><svg class="s30" viewBox="0 0 30 30"><circle cx="16" cy="15" r="14" fill="#d04a26"/><path d="M16 1a14 14 0 0 1 14 14H16z" fill="#ff8f6b"/><path d="M16 15h14a14 14 0 0 1-14 14z" fill="#d8552f"/><rect x="1" y="8" width="15" height="15" rx="1" fill="#b7320f"/><text x="8.500" y="20" text-anchor="middle" font-family="Open Sans, sans-serif" font-size="12" font-weight="700" fill="#fff">P</text></svg></span>
  <span class="tk app run split"><svg class="s30" viewBox="0 0 30 30"><circle cx="15" cy="15" r="14" fill="#db4437"/><path d="M15 15L27 22A14 14 0 0 1 8 27z" fill="#ffcd40"/><path d="M15 15L8 27 1.500 18A14 14 0 0 1 3 8z" fill="#0f9d58"/><circle cx="15" cy="15" r="6.500" fill="#fff"/><circle cx="15" cy="15" r="5" fill="#4285f4"/></svg></span>
  <span class="tk app run"><svg class="s30" viewBox="0 0 30 30"><rect x="7" y="1" width="22" height="28" rx="1" fill="#2b7cd3"/><rect x="7" y="1" width="22" height="7" fill="#41a5ee"/><rect x="7" y="15" width="22" height="7" fill="#185abd"/><rect x="7" y="22" width="22" height="7" fill="#103f91"/><rect x="1" y="8" width="15" height="15" rx="1" fill="#185abd"/><text x="8.500" y="20" text-anchor="middle" font-family="Open Sans, sans-serif" font-size="12" font-weight="700" fill="#fff">W</text></svg></span>
  <span class="tk app"><svg class="s30" viewBox="0 0 30 30"><rect x="7" y="1" width="22" height="28" rx="1" fill="#21a366"/><rect x="18" y="1" width="11" height="7" fill="#33c481"/><rect x="7" y="15" width="11" height="14" fill="#185c37"/><rect x="18" y="15" width="11" height="7" fill="#107c41"/><rect x="18" y="22" width="11" height="7" fill="#185c37"/><rect x="1" y="8" width="15" height="15" rx="1" fill="#107c41"/><text x="8.500" y="20" text-anchor="middle" font-family="Open Sans, sans-serif" font-size="12" font-weight="700" fill="#fff">X</text></svg></span>
  <span class="tk app"><svg class="s30" viewBox="0 0 30 30"><ellipse cx="12" cy="12" rx="11" ry="9.500" fill="#5cc83a"/><path d="M6 18v6l6-4z" fill="#5cc83a"/><circle cx="8.500" cy="10" r="1.500" fill="#fff"/><circle cx="15" cy="10" r="1.500" fill="#fff"/><ellipse cx="21" cy="19" rx="9" ry="8" fill="#f4f4f4"/><path d="M24 25l3 4 0-5z" fill="#f4f4f4"/><circle cx="18" cy="18" r="1.300" fill="#557"/><circle cx="24" cy="18" r="1.300" fill="#557"/></svg></span>
  <span class="tk app"><svg class="s30"><use href="#rhino"/></svg></span>
  <span class="tk app"><svg class="s30" viewBox="0 0 30 30"><rect x="2" y="2" width="26" height="26" fill="#2b0404" stroke="#d4150e" stroke-width="2"/><path d="M8 23c3-3 6-10 6-15 0-3 3 0 1 4-1 5 3 8 8 8-6-1-10 0-15 3z" fill="none" stroke="#c8c0c0" stroke-width="1.200"/></svg></span>
  <span class="tk app"><svg class="s30" viewBox="0 0 30 30"><rect x="2" y="2" width="26" height="26" fill="#2c1400" stroke="#f07d00" stroke-width="2"/><text x="15" y="21" text-anchor="middle" font-family="Open Sans, sans-serif" font-size="15" font-weight="600" fill="#f59a23">Ai</text></svg></span>
  <span class="tk app run"><svg class="s30" viewBox="0 0 30 30"><path d="M1 4h11l3 3v3H1z" fill="#d9a21b"/><rect x="1" y="6" width="28" height="20" rx="1" fill="#fcd56b"/><path d="M7 26v-9h16v9h-4v-5h-8v5z" fill="#2f8fd8"/></svg></span>
  <span class="tk app run lit"><svg class="s30" viewBox="0 0 30 30"><rect width="30" height="30" fill="#111"/><path d="M0 0h9l5 5 6 3 2 7-3 8-8 1-5-5-6-10zM24 16l4 2v4l-5 3z" fill="#f0f0f0"/><path d="M6 11l6 3 4 2-3 4-5-3z" fill="#222"/><text x="25" y="12" text-anchor="middle" font-family="Open Sans, sans-serif" font-size="13" fill="#ccc">6</text></svg></span>
  <div class="tray">
    <span class="tr w30"><svg viewBox="0 0 14 14"><path d="M1 11l6-7 6 7" fill="none" stroke="#fff" stroke-width="1.100"/></svg></span>
    <span class="tr w32"><svg viewBox="0 0 20 20"><rect x="3" y="8" width="14" height="9" fill="#cde" stroke="#fff"/><path d="M4 2v4M7 2v4M3 5h5" stroke="#fff"/></svg></span>
    <span class="tr w38"><svg viewBox="0 0 22 22"><path d="M4 21l2-7c1-2 3-2 4-1l-3 5M6 14l8-11c3-2 5 1 3 3l-7 8c-1 1-1 3 1 3" fill="none" stroke="#fff" stroke-width="1.100"/></svg></span>
    <span class="tr w48 eng">ENG</span>
    <span class="tr w80 clock"><span>1:36 PM</span><span>8/6/2020</span></span>
    <span class="tr notif"><svg viewBox="0 0 22 20"><path d="M2 1h17v13H2z" fill="#fff"/><path d="M5 4h11M5 7h11M5 10h11" stroke="#234" stroke-width="1"/></svg><b>24</b></span>
  </div>
</div>
</body>
</html>
```
FILE: styles.css
```css
* { box-sizing: border-box; }
html, body { margin: 0; height: 100%; }
body {
  width: 1920px; height: 1080px; overflow: hidden;
  display: flex; flex-direction: column;
  background: #e9ebf0; color: #111;
  font: 14px/20px "Open Sans", "Noto Sans", sans-serif;
  position: relative;
}
i { font-style: normal; display: block; }
svg { display: block; }
.defs { position: absolute; width: 0; height: 0; }

.titlebar { height: 29px; background: #0078d7; color: #fff; display: flex; align-items: center; flex: none; }
.app-icon { width: 20px; height: 22px; margin: 0 5px 0 2px; }
.title-text { font-size: 14.5px; letter-spacing: -.1px; }
.winbtns { margin-left: auto; display: flex; margin-right: 3px; }
.winbtns svg { width: 60px; height: 29px; margin-left: -1px; }

.menubar { height: 23px; background: #fff; display: flex; align-items: center; padding-left: 7px; gap: 14.2px; flex: none; }

.cmd { height: 67px; padding-top: 5px; display: flex; flex: none; }
.cmd-main { flex: 1; margin-left: 8px; background: #fff; box-shadow: -4px 0 0 -2px #d5d9e4; display: flex; flex-direction: column; }
.history { border-bottom: 1px solid #c5cfe0; padding-left: 2px; line-height: 20px; margin-top: -1px; height: 40px; }
.prompt { height: 23px; display: flex; align-items: center; padding-left: 2px; gap: 3px; }
.caret { width: 5px; height: 20px; background: #000; }
.cmd-side { width: 21px; display: flex; flex-direction: column; }
.cmd-scroll { height: 39px; display: flex; flex-direction: column; align-items: center; justify-content: space-around; padding: 4px 0; }
.cmd-scroll svg { width: 12px; height: 8px; }
.spin { display: flex; flex-direction: column; gap: 1px; padding-top: 2px; margin-left: 1px; width: 18px; }
.spin span { height: 10px; border: 1px solid #a8a8a8; background: #e4e6ec; position: relative; }
.spin span::after { content: ""; position: absolute; left: 4px; border: 4px solid transparent; }
.spin .up::after { top: -2px; border-bottom: 4px solid #111; }
.spin .down::after { top: 2px; border-top: 4px solid #111; }

.ribbon { margin-top: 3px; height: 28px; padding: 4px 0 0 8px; display: flex; align-items: stretch; border-top: 1px solid #d5d9e4; border-bottom: 1px solid #c5cfe0; flex: none; position: relative; }
.rtab { position: relative; isolation: isolate; padding: 0 15.6px; display: flex; align-items: center; margin-bottom: -1px; white-space: nowrap; color: #222; }
.rtab::before, .rtab::after { content: ""; position: absolute; z-index: -1; clip-path: polygon(14px 0, calc(100% - 4px) 0, 100% 4px, 100% 100%, 0 100%); }
.rtab::before { inset: 0; background: #c5cfe0; }
.rtab::after { inset: 1px 0 0 1px; background: #d8d8d8; }
.rtab.current { padding: 0 14px 0 15px; z-index: 2; }
.rtab.current::before { clip-path: polygon(4px 0, calc(100% - 4px) 0, 100% 4px, 100% 100%, 0 100%, 0 4px); }
.rtab.current::after { background: #e9ebf0; inset: 1px 1px 0 1px; clip-path: polygon(4px 0, calc(100% - 4px) 0, 100% 4px, 100% 100%, 0 100%, 0 4px); }
.ribbon-gear { position: absolute; right: 1px; top: 6px; width: 18px; height: 18px; }

.toolbar { height: 40px; padding: 0 0 6px 8px; display: flex; align-items: center; flex: none; }
.t { width: 28px; height: 34px; display: flex; align-items: center; justify-content: center; position: relative; flex: none; }
.t svg { width: 24px; height: 24px; }
.m::after { content: ""; position: absolute; right: 1px; bottom: 3px; border: 3px solid transparent; border-right-color: #777; border-bottom-color: #777; }
.dots { background-image: radial-gradient(#bbb .6px, transparent .8px); background-size: 2px 2px; }
.wheel { width: 23px; height: 23px; border-radius: 50%; background: conic-gradient(#f5d200, #3cb44b, #20b4c8, #2a3fc8, #b72ea8, #e8282c, #f58a14, #f5d200); -webkit-mask: radial-gradient(circle, transparent 6.5px, #000 7px); mask: radial-gradient(circle, transparent 6.5px, #000 7px); }
.wheel.sm { width: 18px; height: 18px; -webkit-mask: radial-gradient(circle, transparent 5px, #000 5.5px); mask: radial-gradient(circle, transparent 5px, #000 5.5px); }

.work { flex: 1; display: flex; min-height: 0; }
.grip { height: 2px; border-top: 1px solid #c5cfe0; margin-top: 5px; flex: none; }
.leftbar { width: 64px; flex: none; }
.leftbar .grip { margin: 5px 5px 0 3px; }
.ltools { display: grid; grid-template-columns: 28px 28px; grid-auto-rows: 28.05px; padding: 2px 0 0 1px; }
.l { display: flex; align-items: center; justify-content: center; position: relative; }
.l svg { width: 22px; height: 22px; }

.named { width: 79px; flex: none; margin-right: 7px; display: flex; flex-direction: column; height: 782px; }
.ntabs { height: 26px; display: flex; align-items: flex-end; flex: none; }
.ntabs .stab { height: 24px; padding-top: 2px; }
.panel-gear { width: 20px; height: 20px; margin: 0 0 0 auto; }
.stab { position: relative; isolation: isolate; height: 23px; display: flex; align-items: center; gap: 3px; padding: 0 12px 0 3px; white-space: nowrap; color: #222; flex: none; }
.stab::before, .stab::after { content: ""; position: absolute; z-index: -1; clip-path: polygon(4px 0, calc(100% - 14px) 0, 100% 100%, 0 100%, 0 4px); }
.stab::before { inset: 0; background: #c5cfe0; }
.stab::after { inset: 1px 1px 0 1px; background: #e4e6ec; }
.stab.current::after { background: #f5f6fa; }
.nt { width: 58px; }
.s16 { width: 18px; height: 18px; flex: none; }
.s22 { width: 22px; height: 22px; flex: none; }
.ntools { height: 152px; background: #f5f6fa; border: 1px solid #c5cfe0; display: grid; grid-template-columns: 28px 28px; grid-auto-rows: 30px; flex: none; }
.n { display: flex; align-items: center; justify-content: center; }
.n svg { width: 22px; height: 22px; }
.nempty { flex: 1; background: #fff; border: 1px solid #c5cfe0; border-width: 0 1px; display: flex; align-items: center; text-align: center; padding: 41px 1px 0; font-style: italic; color: #4a5a7a; }
.nopts { height: 146px; border: 1px solid #c5cfe0; background: #f5f6fa; padding: 4px 0 0 9px; overflow: hidden; flex: none; }
.opt { display: flex; align-items: center; gap: 4px; height: 28px; white-space: nowrap; letter-spacing: -.25px; }
.opt .cb { width: 16px; height: 16px; }
.opt.off { color: #999; }
.opt.off .cb { border-color: #ccc; }

.cb { width: 15px; height: 15px; border: 1px solid #333; background: #fff; flex: none; position: relative; }
.cb.on::after { content: ""; position: absolute; left: 4px; top: 1px; width: 5px; height: 9px; border: solid #222; border-width: 0 1.4px 1.4px 0; transform: rotate(40deg); }

.viewcol { width: 1365px; flex: none; display: flex; flex-direction: column; height: 784px; }
.viewport { height: 758px; background: #fff; border-bottom: 1px solid #c5cfe0; position: relative; flex: none; }
.scene { width: 100%; height: 756px; }
.vp-label { position: absolute; left: 0; top: 0; width: 114px; height: 23px; background: #8ba6c6; display: flex; align-items: center; padding-left: 10px; color: #111; }
.vp-label b { flex: 1; letter-spacing: -.2px; }
.vp-drop { width: 14px; height: 100%; border-left: 1px solid #111; position: relative; }
.vp-drop::after { content: ""; position: absolute; left: 2px; top: 9px; border: 4.500px solid transparent; border-top: 5px solid #111; }
.vtabs { display: flex; height: 26px; margin-top: 1px; letter-spacing: -.2px; }
.vtab { position: relative; isolation: isolate; display: flex; align-items: center; justify-content: center; color: #222; }
.vtab::before, .vtab::after { content: ""; position: absolute; z-index: -1; clip-path: polygon(0 0, 100% 0, 100% calc(100% - 4px), calc(100% - 4px) 100%, 12px 100%); }
.vtab::before { inset: 0; background: #c5cfe0; }
.vtab::after { inset: 0 1px 1px 1px; background: #d6d6d6; }
.vtab:nth-child(1) { width: 95px; padding-left: 7px; }
.vtab:nth-child(2) { width: 47px; padding-left: 6px; }
.vtab:nth-child(3) { width: 57px; padding-left: 5px; }
.vtab:nth-child(4) { width: 57px; padding-left: 5px; }
.vtab.add { width: 37px; padding-left: 6px; }
.vtab.add svg { width: 14px; height: 14px; }
.vtab.current::after, .vtab.add::after { background: #e9ebf0; }

.layers { width: 397px; flex: none; margin-left: 8px; display: flex; flex-direction: column; height: 783px; }
.layers .grip { margin-right: 4px; }
.ltabs { height: 27px; display: flex; align-items: flex-end; gap: 3px; flex: none; }
.ltabs .stab { width: 59px; padding: 2px 0 0 3px; letter-spacing: -.2px; }
.ltabs .panel-gear { margin: 0 2px 0 auto; }
.lpanel { flex: 1; border: 1px solid #c5cfe0; border-right: 0; background: #fff; display: flex; flex-direction: column; min-height: 0; }
.ltoolbar { height: 30px; background: #f5f6fa; border-bottom: 1px solid #c5cfe0; display: flex; align-items: center; margin-left: -1px; flex: none; }
.p { width: 28px; height: 28px; display: flex; align-items: center; justify-content: center; position: relative; }
.p svg { width: 21px; height: 21px; }
.p.m::after { right: 2px; bottom: 2px; border-right-color: #111; border-bottom-color: #111; }
.lgrid { display: grid; grid-template-columns: 193px 21px 21px 21px 21px 79px 34px; width: 391px; }
.lhead { height: 26px; align-items: stretch; flex: none; }
.lhead > span { border-right: 1px solid #dfe2ea; display: flex; align-items: center; padding-left: 6px; }
.lhead > span:last-child { border-right: 0; padding-left: 8px; }
.lhead .c-mat { padding-left: 7px; }
.lrows { flex: 1; padding-top: 1px; }
.lrow { height: 24px; border-bottom: 1px dotted #dcdfe6; align-items: center; overflow: hidden; letter-spacing: -.2px; }
.lrow .c-name { padding-left: 8px; }
.lrow > span { white-space: nowrap; overflow: hidden; }
.lrow > .c-mat { overflow: visible; }
.ic { display: flex; align-items: center; justify-content: center; height: 100%; }
.ic svg { width: 17px; height: 17px; }
.ic .chk { width: 20px; height: 20px; flex: none; }
.sq { width: 14px; height: 14px; background: #000; }
.c-mat { display: flex; align-items: center; gap: 6px; }
.lrow .c-mat { padding-left: 4px; }
.lrow .c-line { padding-left: 6px; }
.dot { width: 18px; height: 18px; border-radius: 50%; border: 1px solid #333; flex: none; }
.dot.faint { border-color: #eee; background: #fafafa; }
.c-white { background: #fff; }
.c-brown { background: #8a7a60; }
.c-gray { background: #6a6a6a; }
.c-rust { background: #7f4210; }
.c-black { background: #111; }
.sel { background: #0078d7; color: #fff; font-weight: 700; border-bottom: 1px dotted #fff; }
.sel .c-sel { background: #fff; border-color: #fff; }
.sel .sq { border: 1px solid #fff; }
.hscroll { height: 20px; background: #f4f4f4; display: flex; align-items: center; flex: none; }
.hscroll svg { width: 8px; height: 12px; margin: 0 4px; flex: none; }
.hscroll .sc-end { margin-right: 12px; }
.track { flex: 1; height: 100%; }
.thumb { width: 254px; height: 100%; background: #cdcdcd; margin-left: 5px; }

.osnap { height: 23px; flex: none; display: flex; align-items: center; gap: 10px; padding: 0 0 2px 13px; letter-spacing: -.25px; }
.sn { display: flex; align-items: center; gap: 4px; white-space: nowrap; color: #222; }
.sn.dis .cb { background: #ddd; border-color: #bbb; }
.sn.dis { color: #333; margin-left: 3px; }
.sn.dis:last-child { margin-left: 11px; }

.status { height: 22px; flex: none; display: flex; border-top: 1px solid #c5cfe0; align-items: stretch; }
.st { display: flex; align-items: center; justify-content: center; border-right: 1px solid #d2d8e4; color: #222; white-space: nowrap; flex: none; letter-spacing: -.15px; }
.st.on { font-weight: 700; background: #e5f1fb; color: #000; letter-spacing: -.5px; }
.layer { justify-content: flex-start; padding-left: 4px; gap: 4px; }
.layer .sq { width: 14px; height: 14px; }
.w60 { width: 60px; } .w107 { width: 107px; } .w108 { width: 108px; } .w109 { width: 109px; } .w208 { width: 208px; } .w80 { width: 80px; } .w54 { width: 54px; } .w57 { width: 57px; } .w58 { width: 58px; } .w91 { width: 91px; } .w71 { width: 71px; } .w114 { width: 114px; } .w50 { width: 50px; }
.mem { padding-left: 1px; white-space: nowrap; display: flex; align-items: center; color: #222; }

.taskbar { height: 50px; background: #00447a; flex: none; display: flex; color: #fff; position: relative; }
.tk { width: 60px; display: flex; align-items: center; justify-content: center; position: relative; flex: none; }
.tk svg { width: 21px; height: 21px; }
.tk .s30 { width: 30px; height: 30px; }
.tk.app { width: 62.1px; }
.tk.first { margin-left: 2.5px; }
.run::after { content: ""; position: absolute; left: 6px; right: 5px; bottom: 0; height: 3px; background: #99c9ec; }
.split::after { right: 16px; }
.split::before { content: ""; position: absolute; left: 46px; right: 5px; bottom: 0; height: 3px; background: #6a9ac4; }
.lit { background: #005a9e; }
.tk.lit::after { left: 0; right: 0; }
.tray { margin-left: auto; display: flex; align-items: stretch; }
.tr { display: flex; align-items: center; justify-content: center; }
.tr svg { width: 20px; height: 20px; }
.w30 { width: 30px; } .w30 svg { width: 14px; height: 14px; }
.w32 { width: 32px; } .w38 { width: 38px; } .w48 { width: 48px; }
.clock { flex-direction: column; line-height: 23px; }
.notif { width: 68px; position: relative; }
.notif svg { width: 22px; height: 20px; margin: -10px 0 0 -3px; }
.notif b { position: absolute; left: 26px; top: 24px; width: 20px; height: 20px; border-radius: 50%; background: #1770c0; border: 1px solid #a7c9e8; font-size: 12px; line-height: 18px; text-align: center; }
```
